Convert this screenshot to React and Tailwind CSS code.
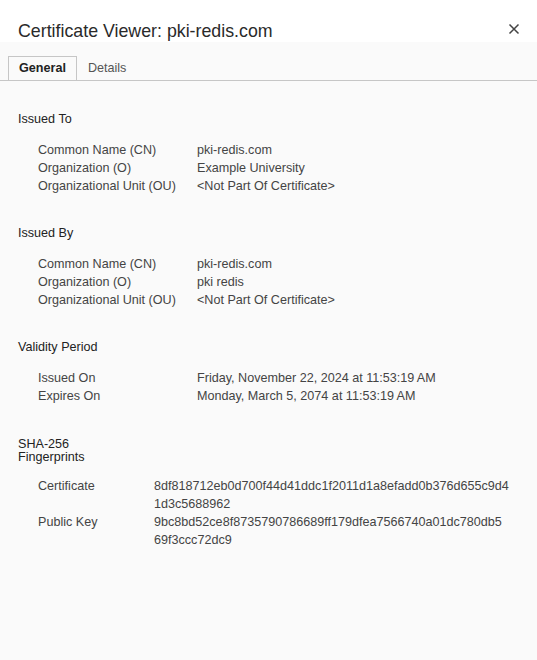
const sections = [
  {
    title: 'Issued To',
    rows: [
      ['Common Name (CN)', 'pki-redis.com'],
      ['Organization (O)', 'Example University'],
      ['Organizational Unit (OU)', '<Not Part Of Certificate>'],
    ],
  },
  {
    title: 'Issued By',
    rows: [
      ['Common Name (CN)', 'pki-redis.com'],
      ['Organization (O)', 'pki redis'],
      ['Organizational Unit (OU)', '<Not Part Of Certificate>'],
    ],
  },
  {
    title: 'Validity Period',
    rows: [
      ['Issued On', 'Friday, November 22, 2024 at 11:53:19\u202FAM'],
      ['Expires On', 'Monday, March 5, 2074 at 11:53:19\u202FAM'],
    ],
  },
]

const fingerprints = [
  ['Certificate', ['8df818712eb0d700f44d41ddc1f2011d1a8efadd0b376d655c9d4', '1d3c5688962']],
  ['Public Key', ['9bc8bd52ce8f8735790786689ff179dfea7566740a01dc780db5', '69f3ccc72dc9']],
]

function Section({ title, rows }) {
  return (
    <div className="mb-[30px]">
      <h3 className="text-[12.6px] leading-[16px] text-[#222] font-normal mb-[14px]">{title}</h3>
      <div className="pl-[20px]">
        {rows.map(([label, value]) => (
          <div key={label} className="flex text-[12.6px] leading-[18px] text-[#444]">
            <div className="w-[159px] shrink-0">{label}</div>
            <div>{value}</div>
          </div>
        ))}
      </div>
    </div>
  )
}

export default function App() {
  return (
    <div className="w-[537px] h-[660px] flex flex-col bg-white font-['Liberation_Sans',Arial,sans-serif]">
      <div className="h-[42px] shrink-0 bg-white flex items-center justify-between pl-[18px] pr-[16px] pt-[19px]">
        <h1 className="text-[17.8px] leading-[22px] text-[#2a2a2a] font-normal">Certificate Viewer: pki-redis.com</h1>
        <button className="w-[16px] h-[16px] flex items-center justify-center text-[#444] -mt-[4px] mr-[-1px]">
          <svg width="12" height="12" viewBox="0 0 12 12" fill="none" stroke="currentColor" strokeWidth="1.5">
            <path d="M1.5 1.5L10.5 10.5M10.5 1.5L1.5 10.5" />
          </svg>
        </button>
      </div>
      <div className="flex-1 bg-[#fafafa]">
        <div className="flex pt-[14px] pl-[8px] border-b border-[#c6c6c6]">
          <div className="px-[10px] h-[24px] flex items-center border border-b-0 border-[#c6c6c6] bg-[#fafafa] -mb-px text-[12.6px] font-bold text-[#222]">
            General
          </div>
          <div className="px-[11px] h-[24px] flex items-center text-[12.6px] text-[#555]">Details</div>
        </div>
        <div className="pl-[18px] pt-[30px]">
          {sections.map((s) => (
            <Section key={s.title} {...s} />
          ))}
          <div className="pt-[3px]">
            <h3 className="text-[12.6px] leading-[13px] text-[#222] font-normal w-[80px] mb-[13px]">SHA-256 Fingerprints</h3>
            <div className="pl-[20px]">
              {fingerprints.map(([label, lines]) => (
                <div key={label} className="flex text-[12.6px] leading-[18px] text-[#444]">
                  <div className="w-[116px] shrink-0">{label}</div>
                  <div>
                    {lines.map((l) => (
                      <div key={l}>{l}</div>
                    ))}
                  </div>
                </div>
              ))}
            </div>
          </div>
        </div>
      </div>
    </div>
  )
}
